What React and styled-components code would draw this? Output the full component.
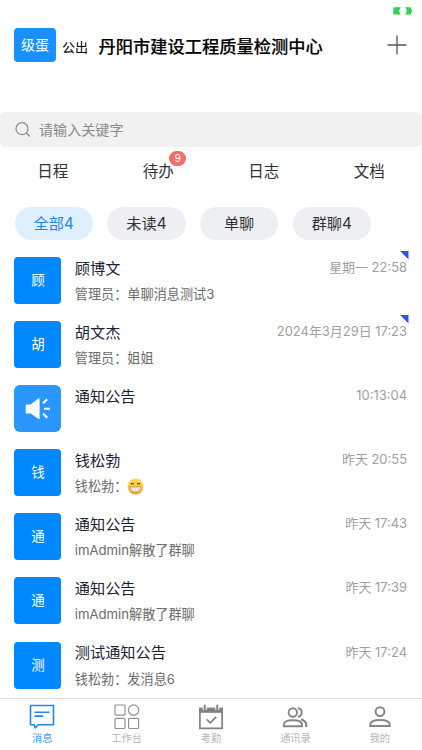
import React from "react";
import styled, { createGlobalStyle } from "styled-components";

const chats = [
  { id: 1, face: "顾", name: "顾博文", text: "管理员：单聊消息测试3", time: "星期一 22:58", corner: true },
  { id: 2, face: "胡", name: "胡文杰", text: "管理员：姐姐", time: "2024年3月29日 17:23", corner: true },
  { id: 3, speaker: true, name: "通知公告", text: "", time: "10:13:04" },
  { id: 4, face: "钱", name: "钱松勃", text: "钱松勃：", smile: true, time: "昨天 20:55" },
  { id: 5, face: "通", name: "通知公告", text: "imAdmin解散了群聊", time: "昨天 17:43" },
  { id: 6, face: "通", name: "通知公告", text: "imAdmin解散了群聊", time: "昨天 17:39" },
  { id: 7, face: "测", name: "测试通知公告", text: "钱松勃：发消息6", time: "昨天 17:24" },
];

const tabs = [
  { label: "日程" },
  { label: "待办", count: 9 },
  { label: "日志" },
  { label: "文档" },
];

const chips = ["全部4", "未读4", "单聊", "群聊4"];

const navs = [
  { label: "消息", Icon: MessageIcon },
  { label: "工作台", Icon: GridIcon },
  { label: "考勤", Icon: CalendarIcon },
  { label: "通讯录", Icon: ContactsIcon },
  { label: "我的", Icon: MineIcon },
];

function BatteryIcon() {
  return (
    <svg width="20" height="8" viewBox="0 0 20 8" fill="#34d05c">
      <path d="M1.5 0.3H7.8L5.8 4L7.8 7.6H1.5Q0.3 7.6 0.3 6.4V1.5Q0.3 0.3 1.5 0.3Z" />
      <path d="M12 0.3H17.4Q18.2 0.3 18.2 1.2V2.4L19.1 2.9V5L18.2 5.5V6.6Q18.2 7.6 17.4 7.6H11.8Q15.4 4 12 0.3Z" />
    </svg>
  );
}

function PlusIcon() {
  return (
    <svg width="20" height="20" viewBox="0 0 20 20" stroke="#555" strokeWidth="1.3">
      <path d="M0.5 10H19.5M10 0.5V19.5" />
    </svg>
  );
}

function SearchIcon() {
  return (
    <svg width="16" height="16" viewBox="0 0 16 16" fill="none" stroke="#8a8a8e" strokeWidth="1.2">
      <circle cx="7" cy="6.7" r="6" />
      <path d="M11.3 11L14.8 14.5" />
    </svg>
  );
}

function SpeakerIcon() {
  return (
    <svg width="26" height="24" viewBox="0 0 26 24" fill="#fff">
      <path d="M1.3 7.4H5.8L13.2 1.6Q14.6 0.8 14.6 2.2V21.2Q14.6 22.6 13.2 21.8L5.8 16.6H1.3Q0.7 16.6 0.7 16V8Q0.7 7.4 1.3 7.4Z" />
      <path d="M18 6.2L22.2 2.2M19 11.8H25M18 16.6L22.2 20.8" stroke="#fff" strokeWidth="2.1" />
    </svg>
  );
}

function SmileIcon() {
  return (
    <svg width="17" height="17" viewBox="0 0 17 17">
      <defs>
        <linearGradient id="face" x1="0" y1="0" x2="0" y2="1">
          <stop offset="0" stopColor="#ffdf57" />
          <stop offset="0.7" stopColor="#fcc63c" />
          <stop offset="1" stopColor="#ee9a2b" />
        </linearGradient>
      </defs>
      <circle cx="8.5" cy="8.5" r="8" fill="url(#face)" />
      <path d="M4 6.4Q5.4 4.2 6.7 6.4M10.3 6.4Q11.6 4.2 13 6.4" fill="none" stroke="#66401a" strokeWidth="1.1" />
      <path d="M2.9 8.7Q8.5 9.5 14.1 8.7Q13.7 14 8.5 14Q3.3 14 2.9 8.7Z" fill="#fff" stroke="#a8722b" strokeWidth="0.7" />
      <path d="M3.5 11.2H13.5M6 9.2V13.3M8.5 9.2V13.7M11 9.2V13.3" stroke="#c3b9a6" strokeWidth="0.5" />
    </svg>
  );
}

function MessageIcon() {
  return (
    <svg width="26" height="26" viewBox="0 0 26 26" fill="none" stroke="#2286ea" strokeWidth="1.6">
      <path d="M1.5 1.5H24.5V20.7H9.2L6.2 24L5.2 20.7H1.5Z" strokeLinejoin="round" />
      <path d="M5.5 8.2H20.5M5.5 12.1H14" />
    </svg>
  );
}

function GridIcon() {
  return (
    <svg width="26" height="26" viewBox="0 0 26 26" fill="none" stroke="#8f9094" strokeWidth="1.2">
      <rect x="1" y="1" width="10" height="10.2" rx="1" />
      <circle cx="19.6" cy="6.1" r="5.2" />
      <rect x="1" y="14.3" width="10" height="10.2" rx="1" />
      <rect x="14.6" y="14.3" width="10" height="10.2" rx="1" />
    </svg>
  );
}

function CalendarIcon() {
  return (
    <svg width="26" height="26" viewBox="0 0 26 26" fill="none" stroke="#818287">
      <path d="M1.9 4V24.4H24.1V4" strokeWidth="1.7" />
      <path d="M1.1 3.6H24.9V8.8H1.1Z" fill="#818287" stroke="none" />
      <path d="M6.7 0.7V6M19.3 0.7V6" stroke="#fff" strokeWidth="4" />
      <path d="M6.7 1.4V5.4M19.3 1.4V5.4" strokeWidth="2" strokeLinecap="round" />
      <path d="M8.7 15.3L12.2 18.8L18.2 12.8" strokeWidth="1.7" />
    </svg>
  );
}

function ContactsIcon() {
  return (
    <svg width="26" height="26" viewBox="0 0 26 26" fill="none" stroke="#85868b" strokeWidth="1.9">
      <circle cx="10.8" cy="8.5" r="4.2" />
      <path d="M1.8 22.3V20.5Q1.8 16.2 10.8 16.2Q20 16.2 20 20.5V22.3Z" />
      <path d="M15.8 4.2Q19.7 4.4 19.7 8.5Q19.7 12.2 15.8 12.9" />
      <path d="M19.2 15.3Q24.2 17.2 24.2 20.6V23" strokeWidth="2.2" />
    </svg>
  );
}

function MineIcon() {
  return (
    <svg width="26" height="26" viewBox="0 0 26 26" fill="none" stroke="#85868b" strokeWidth="2">
      <circle cx="13" cy="7.6" r="4.4" />
      <path d="M3.3 22V20.5Q3.3 16 13 16Q22.7 16 22.7 20.5V22Z" />
    </svg>
  );
}

function ChatRow({ chat }) {
  return (
    <Row>
      <Face $speaker={chat.speaker}>{chat.speaker ? <SpeakerIcon /> : chat.face}</Face>
      <Info>
        <Name>{chat.name}</Name>
        <Last>
          {chat.text}
          {chat.smile && <SmileIcon />}
        </Last>
      </Info>
      <Time>{chat.time}</Time>
      {chat.corner && <Corner />}
    </Row>
  );
}

function App() {
  return (
    <Page>
      <GlobalStyle />
      <StatusBar>
        <BatteryIcon />
      </StatusBar>
      <Header>
        <UserBox>级蛋</UserBox>
        <UserState>公出</UserState>
        <Company>丹阳市建设工程质量检测中心</Company>
        <PlusIcon />
      </Header>
      <SearchBar>
        <SearchIcon />
        <span>请输入关键字</span>
      </SearchBar>
      <Tabs>
        {tabs.map((t) => (
          <Tab key={t.label}>
            <TabLabel>
              {t.label}
              {t.count && <Badge>{t.count}</Badge>}
            </TabLabel>
          </Tab>
        ))}
      </Tabs>
      <Chips>
        {chips.map((c, i) => (
          <Chip key={c} $active={i === 0}>
            {c}
          </Chip>
        ))}
      </Chips>
      <List>
        {chats.map((c) => (
          <ChatRow key={c.id} chat={c} />
        ))}
      </List>
      <NavBar>
        {navs.map(({ label, Icon }, i) => (
          <NavItem key={label} $active={i === 0}>
            <Icon />
            <span>{label}</span>
          </NavItem>
        ))}
      </NavBar>
    </Page>
  );
}

export default App;

const GlobalStyle = createGlobalStyle`
  body {
    margin: 0;
    background: #fff;
    font-family: Inter, "Noto Sans CJK SC", sans-serif;
  }
  * {
    box-sizing: border-box;
  }
  svg {
    display: block;
    flex: none;
  }
`;

const Page = styled.div`
  width: 422px;
  height: 750px;
  display: flex;
  flex-direction: column;
  overflow: hidden;
  background: #fff;
`;

const StatusBar = styled.div`
  height: 28px;
  padding: 7px 9px 0 0;
  display: flex;
  justify-content: flex-end;
`;

const Header = styled.header`
  height: 84px;
  padding: 0 15px 50px 14px;
  display: flex;
  align-items: center;
`;

const UserBox = styled.div`
  width: 42px;
  height: 34px;
  border-radius: 4px;
  background: #1890ff;
  color: #fff;
  font-size: 14px;
  line-height: 34px;
  text-align: center;
`;

const UserState = styled.div`
  margin: 4px 0 0 6px;
  width: 36.5px;
  font-size: 13px;
  line-height: 20px;
  color: #000;
`;

const Company = styled.h1`
  flex: 1;
  margin: 4px 0 0;
  font-size: 17.25px;
  line-height: 24px;
  font-weight: 500;
  white-space: nowrap;
  color: #000;
  -webkit-text-stroke: 0.15px #000;
`;

const SearchBar = styled.div`
  height: 35px;
  padding-left: 15px;
  display: flex;
  align-items: center;
  gap: 8px;
  border-radius: 5px;
  background: #f1f1f1;
  color: #8a8a8e;
  font-size: 14.1px;
  line-height: 20px;
`;

const Tabs = styled.div`
  height: 60px;
  display: flex;
`;

const Tab = styled.div`
  flex: 1;
  display: flex;
  justify-content: center;
  padding-top: 13px;
`;

const TabLabel = styled.div`
  position: relative;
  height: 24px;
  font-size: 15.5px;
  line-height: 24px;
  color: #303133;
`;

const Badge = styled.span`
  position: absolute;
  left: 26.5px;
  top: -9px;
  width: 17px;
  height: 15px;
  border-radius: 8px;
  background: #f56c6c;
  color: #fff;
  font-size: 10.5px;
  line-height: 15px;
  text-align: center;
`;

const Chips = styled.div`
  padding-left: 14.5px;
  display: flex;
  gap: 14.3px;
`;

const Chip = styled.div`
  width: 78.4px;
  height: 32.5px;
  border-radius: 17px;
  background: ${(p) => (p.$active ? "#def0ff" : "#eeeff3")};
  color: ${(p) => (p.$active ? "#1e84ea" : "#303133")};
  font-size: 15.2px;
  line-height: 33px;
  text-align: center;
`;

const List = styled.div`
  flex: 1;
  min-height: 0;
  padding-top: 10.5px;
  overflow: hidden;
`;

const Row = styled.div`
  position: relative;
  height: 64.1px;
  padding: 7px 15px 0 14.4px;
  display: flex;
`;

const Face = styled.div`
  width: 47px;
  height: 47px;
  flex: none;
  border-radius: ${(p) => (p.$speaker ? "6px" : "4px")};
  background: ${(p) => (p.$speaker ? "#2997ff" : "#0088ff")};
  color: #fff;
  font-size: 13.5px;
  line-height: 47px;
  text-align: center;

  svg {
    margin: 11.5px auto 0 11px;
  }
`;

const Info = styled.div`
  flex: 1;
  padding-left: 13.4px;
`;

const Name = styled.div`
  padding-top: 0.5px;
  font-size: 15.2px;
  line-height: 22px;
  color: #1a2238;
`;

const Last = styled.div`
  margin-top: 3.5px;
  height: 22px;
  display: flex;
  align-items: center;
  font-size: 13.15px;
  line-height: 22px;
  color: #6b6b6b;
`;

const Time = styled.div`
  font-size: 12.95px;
  line-height: 20px;
  white-space: nowrap;
  color: #a0a0a0;
`;

const Corner = styled.i`
  position: absolute;
  right: 13.5px;
  top: 0.5px;
  width: 9px;
  height: 9px;
  background: #3352ee;
  clip-path: polygon(0 0, 100% 0, 100% 100%);
`;

const NavBar = styled.nav`
  height: 52px;
  flex: none;
  padding-top: 5px;
  display: flex;
  border-top: 1px solid #e2e2e2;
  background: #fff;
`;

const NavItem = styled.div`
  flex: 1;
  display: flex;
  flex-direction: column;
  align-items: center;
  font-size: 10.2px;
  line-height: 16px;
  color: ${(p) => (p.$active ? "#3c98f2" : "#b5b6bc")};
`;
